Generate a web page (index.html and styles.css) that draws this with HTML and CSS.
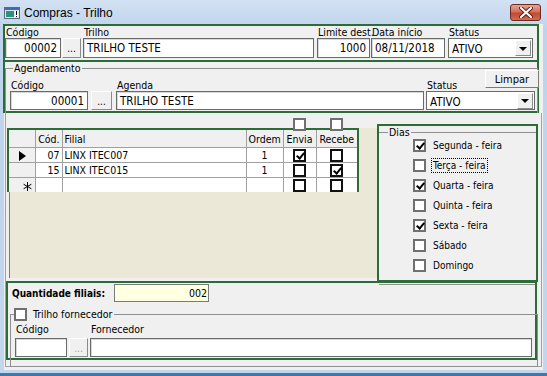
FILE: index.html
```html
<!DOCTYPE html>
<html>
	<head>
		<link rel="stylesheet" href="styles.css">
	</head>
	<body>
		<div class="window">
			<div class="titlebar">
				<svg class="app-icon" width="16" height="12" viewBox="0 0 16 12">
					<rect x="0.5" y="0.5" width="15" height="11" fill="#dfe6ee" stroke="#5b6b7d"/>
					<rect x="1" y="1" width="14" height="2" fill="#3a6fb0"/>
					<rect x="2" y="4" width="8" height="6" fill="#2f8f7a"/>
					<rect x="11" y="4" width="3" height="6" fill="#ffffff"/>
					<rect x="12" y="4" width="1" height="4" fill="#000"/>
					<rect x="12" y="9" width="1" height="1" fill="#000"/>
				</svg>
				<span class="title">Compras - Trilho</span>
				<div class="close">
					<svg width="14" height="11" viewBox="0 0 14 11">
						<path d="M2 1 L12 10 M12 1 L2 10" stroke="#5a1a12" stroke-width="4" stroke-linecap="round"/>
						<path d="M2 1 L12 10 M12 1 L2 10" stroke="#ffffff" stroke-width="2.2" stroke-linecap="round"/>
					</svg>
				</div>
			</div>

			<div class="client">
				<div class="hl box-main">
					<div class="field w-cod">
						<label>Código</label>
						<div class="input right">00002</div>
					</div>
					<div class="field w-dots">
						<label>&nbsp;</label>
						<div class="dots">...</div>
					</div>
					<div class="field w-trilho">
						<label>Trilho</label>
						<div class="input">TRILHO TESTE</div>
					</div>
					<div class="field w-limite">
						<label>Limite dest.</label>
						<div class="input right">1000</div>
					</div>
					<div class="field w-data">
						<label>Data início</label>
						<div class="input">08/11/2018</div>
					</div>
					<div class="field w-status">
						<label>Status</label>
						<div class="select"><span>ATIVO</span><i class="arrow"></i></div>
					</div>
				</div>

				<div class="hl box-agenda">
					<fieldset class="group agenda">
						<legend>Agendamento</legend>
						<button class="limpar">Limpar</button>
						<div class="agenda-row">
							<div class="field w-cod2">
								<label>Código</label>
								<div class="input right">00001</div>
							</div>
							<div class="field w-dots2">
								<label>&nbsp;</label>
								<div class="dots">...</div>
							</div>
							<div class="field w-agenda">
								<label>Agenda</label>
								<div class="input">TRILHO TESTE</div>
							</div>
							<div class="field w-status2">
								<label>Status</label>
								<div class="select"><span>ATIVO</span><i class="arrow"></i></div>
							</div>
						</div>
					</fieldset>
				</div>

				<div class="panel">
					<div class="middle">
						<div class="left">
							<div class="check-row">
								<span class="cb gray envia-all"></span>
								<span class="cb gray recebe-all"></span>
							</div>
							<div class="grid-ctl">
								<div class="hl grid-box">
									<table class="grid">
										<colgroup>
											<col class="c-ind"><col class="c-cod"><col class="c-filial"><col class="c-ordem"><col class="c-envia"><col class="c-recebe">
										</colgroup>
										<tr class="head">
											<td></td><td class="tr">Cód.</td><td>Filial</td><td class="tr">Ordem</td><td class="tc">Envia</td><td class="tc">Recebe</td>
										</tr>
										<tr class="r1">
											<td class="ind"><i class="tri"></i></td><td class="tr">07</td><td>LINX ITEC007</td><td class="tc">1</td>
											<td class="tc"><span class="cb dark on"></span></td><td class="tc"><span class="cb dark"></span></td>
										</tr>
										<tr class="r2">
											<td class="ind"></td><td class="tr">15</td><td>LINX ITEC015</td><td class="tc">1</td>
											<td class="tc"><span class="cb dark"></span></td><td class="tc"><span class="cb dark on"></span></td>
										</tr>
										<tr class="r3">
											<td class="ind">
												<svg class="star" width="9" height="9" viewBox="0 0 9 9">
													<path d="M4.5 0 V9 M0.6 2.25 L8.4 6.75 M0.6 6.75 L8.4 2.25" stroke="#000" stroke-width="1"/>
												</svg>
											</td><td></td><td></td><td></td>
											<td class="tc"><span class="cb dark"></span></td><td class="tc"><span class="cb dark"></span></td>
										</tr>
									</table>
								</div>
							</div>
						</div>

						<div class="hl dias-box">
							<fieldset class="group dias">
								<legend>Dias</legend>
								<ul class="days">
									<li><span class="cb gray on"></span><span class="day">Segunda - feira</span></li>
									<li><span class="cb gray"></span><span class="day focus">Terça - feira</span></li>
									<li><span class="cb gray on"></span><span class="day">Quarta - feira</span></li>
									<li><span class="cb gray"></span><span class="day">Quinta - feira</span></li>
									<li><span class="cb gray on"></span><span class="day">Sexta - feira</span></li>
									<li><span class="cb gray"></span><span class="day">Sábado</span></li>
									<li><span class="cb gray"></span><span class="day">Domingo</span></li>
								</ul>
							</fieldset>
						</div>
					</div>

					<div class="hl box-bottom">
						<div class="qtd-row">
							<span class="qtd-label">Quantidade filiais:</span>
							<div class="input qtd right">002</div>
						</div>
						<fieldset class="group forn">
							<legend><span class="cb gray"></span><span>Trilho fornecedor</span></legend>
							<div class="forn-row">
								<div class="field w-cod3">
									<label>Código</label>
									<div class="input"></div>
								</div>
								<div class="field w-dots3">
									<label>&nbsp;</label>
									<div class="dots disabled">...</div>
								</div>
								<div class="field w-forn">
									<label>Fornecedor</label>
									<div class="input"></div>
								</div>
							</div>
						</fieldset>
					</div>
				</div>
			</div>
		</div>
	</body>
</html>
```

FILE: styles.css
```css
body {
	margin: 0;
	background: #3b6d9c;
}
.window {
	width: 547px;
	height: 376px;
	box-sizing: border-box;
	background: linear-gradient(#d3e2f3, #bed3ec 30px, #c2d6ee);
	border-bottom: 3px solid #3d79ad;
	display: flex;
	flex-direction: column;
	font-family: "DejaVu Sans Condensed", "DejaVu Sans", sans-serif;
	font-stretch: condensed;
	font-size: 10.5px;
	color: #000;
}
.titlebar {
	height: 24px;
	display: flex;
	align-items: center;
	padding-left: 4px;
	flex-shrink: 0;
}
.app-icon {
	margin-top: 2px;
}
.title {
	font-family: "Liberation Sans", sans-serif;
	font-stretch: normal;
	font-size: 12px;
	margin-left: 4px;
	margin-top: 2px;
}
.close {
	margin-left: auto;
	margin-right: 6px;
	margin-top: 1px;
	width: 31px;
	height: 17px;
	box-sizing: border-box;
	border: 1px solid #6b2a22;
	border-radius: 3px;
	background: linear-gradient(#e8a493, #d2705c 45%, #c24a33 55%, #cf6b52);
	display: flex;
	justify-content: center;
	align-items: center;
}
.client {
	flex: 1;
	margin: 0 4px 3px 4px;
	background: #f0f0f0;
	display: flex;
	flex-direction: column;
}

/* green highlight boxes */
.hl {
	border: 2px solid #2c6c38;
	box-sizing: border-box;
}

/* fields */
.field {
	display: flex;
	flex-direction: column;
	flex-shrink: 0;
}
.field label {
	display: block;
	height: 12px;
	line-height: 12px;
	padding-left: 1px;
	white-space: nowrap;
}
.input {
	height: 20px;
	box-sizing: border-box;
	border: 1px solid #6a6a6a;
	box-shadow: inset 1px 1px 0 #d8d8d8;
	background: #fff;
	font-size: 11.5px;
	line-height: 19px;
	padding: 0 3px;
	white-space: nowrap;
	overflow: hidden;
}
.right {
	text-align: right;
}
.dots {
	height: 20px;
	box-sizing: border-box;
	border: 1px solid;
	border-color: #fff #8a8a8a #8a8a8a #fff;
	background: #f0f0f0;
	text-align: center;
	line-height: 20px;
	font-size: 10px;
}
.dots.disabled {
	color: #a0a0a0;
}
.select {
	height: 20px;
	box-sizing: border-box;
	border: 1px solid #6a6a6a;
	background: #fff;
	display: flex;
	align-items: center;
	font-size: 11.5px;
	padding-left: 3px;
}
.select span {
	flex: 1;
	margin-top: 2px;
}
.arrow {
	width: 16px;
	height: 16px;
	margin-right: 1px;
	box-sizing: border-box;
	border: 1px solid;
	border-color: #fff #8a8a8a #8a8a8a #fff;
	background: #f0f0f0;
	display: flex;
	justify-content: center;
	align-items: center;
}
.arrow::after {
	content: "";
	border-top: 4px solid #000;
	border-left: 4px solid transparent;
	border-right: 4px solid transparent;
	margin-top: 1px;
}

/* top box */
.box-main {
	width: 536px;
	height: 38px;
	margin-left: -1px;
	display: flex;
	align-items: flex-end;
	padding-bottom: 2px;
}
.w-cod { width: 56px; }
.w-dots { width: 19px; margin-left: 1px; }
.w-trilho { width: 231px; margin-left: 2px; }
.w-limite { width: 53px; margin-left: 3px; }
.w-data { width: 74px; margin-left: 1px; }
.w-status { width: 85px; margin-left: 3px; }

/* agenda box */
.box-agenda {
	width: 536px;
	height: 53px;
	margin: -2px 0 0 -1px;
}
.group {
	margin: 0;
	padding: 0;
	border: 1px solid #8f8f8f;
	min-width: 0;
}
.group legend {
	padding: 0 1px;
	line-height: 10px;
	height: 10px;
}
.agenda {
	width: 531px;
	height: 49px;
	border-bottom: none;
	position: relative;
	margin-top: 1px;
}
.agenda legend {
	margin-left: 7px;
}
.limpar {
	position: absolute;
	right: -2px;
	top: -3px;
	width: 54px;
	height: 18px;
	border: 1px solid;
	border-color: #fff #7a7a7a #7a7a7a #fff;
	background: #f0f0f0;
	font: inherit;
	font-size: 11px;
	padding: 0;
}
.agenda-row {
	display: flex;
	align-items: flex-end;
	padding-left: 4px;
	margin-top: 6px;
}
.agenda-row .input,
.agenda-row .select,
.agenda-row .dots {
	height: 19px;
}
.w-cod2 { width: 78px; }
.w-dots2 { width: 21px; margin-left: 3px; }
.w-agenda { width: 308px; margin-left: 4px; }
.w-status2 { width: 109px; margin-left: 2px; }

/* panel with grid and days */
.panel {
	width: 537px;
	margin-left: 1px;
	height: 254px;
	box-sizing: border-box;
	border: 1px solid #a0a0a0;
	border-top: none;
	display: flex;
	flex-direction: column;
}
.middle {
	display: flex;
	height: 168px;
}
.left {
	width: 371px;
}
.check-row {
	height: 17px;
	position: relative;
}
.cb {
	display: inline-block;
	width: 13px;
	height: 13px;
	box-sizing: border-box;
	background: #fff;
	border: 2px solid #707070;
	position: relative;
	vertical-align: middle;
	flex-shrink: 0;
}
.cb.dark {
	border-color: #111;
}
.cb.on::after {
	content: "";
	position: absolute;
	left: 3px;
	top: 0px;
	width: 3px;
	height: 6px;
	border: solid #000;
	border-width: 0 2px 2px 0;
	transform: rotate(40deg);
}
.check-row .cb {
	position: absolute;
	top: 5px;
}
.envia-all { left: 287px; }
.recebe-all { left: 324px; }

.grid-ctl {
	margin-left: 3px;
	width: 368px;
	height: 150px;
	box-sizing: border-box;
	background: #ebe8d8;
	border-left: 1px solid #7a7a7a;
}
.grid-box {
	margin: -2px 0 0 -3px;
	width: 352px;
	height: 64px;
}
.grid {
	border-collapse: collapse;
	table-layout: fixed;
	width: 348px;
	font-size: 10.5px;
}
.c-ind { width: 26px; }
.c-cod { width: 27px; }
.c-filial { width: 184px; }
.c-ordem { width: 37px; }
.c-envia { width: 33px; }
.c-recebe { width: 41px; }
.grid td {
	border: 1px solid #a0a0a0;
	padding: 0 2px;
	height: 14px;
	line-height: 13px;
	white-space: nowrap;
	overflow: hidden;
	background: #fff;
}
.grid tr.head td {
	height: 16px;
	background: #f0f0f0;
	padding-top: 1px;
}
.grid td.ind {
	background: #f0f0f0;
	text-align: center;
	padding: 0;
}
.grid tr td:first-child {
	border-left: none;
}
.grid tr.head td {
	border-top: none;
}
.grid tr.r3 td {
	border-bottom: none;
}
.grid tr td:last-child {
	border-right: none;
}
.tr { text-align: right; }
.tc { text-align: center; }
.grid td.tc {
	padding: 0;
}
.grid .cb {
	vertical-align: top;
	margin-top: 1px;
}
.tri {
	display: inline-block;
	width: 0;
	height: 0;
	border-left: 7px solid #000;
	border-top: 5px solid transparent;
	border-bottom: 5px solid transparent;
	vertical-align: middle;
	margin-left: 2px;
}
.star {
	display: block;
	margin: 2px auto 0 14px;
}

.dias-box {
	width: 161px;
	height: 158px;
	margin-top: 11px;
}
.dias {
	height: 156px;
	border-left: none;
	border-right: none;
	margin-top: 1px;
}
.dias legend {
	margin-left: 9px;
}
.days {
	list-style: none;
	margin: -2px 0 0 0;
	padding: 0 0 0 34px;
	font-size: 10px;
}
.days li {
	height: 20px;
	display: flex;
	align-items: center;
}
.day {
	margin-left: 5px;
	padding: 0 1px;
	line-height: 13px;
	border: 1px solid transparent;
}
.day.focus {
	border: 1px dotted #000;
}

/* bottom box */
.box-bottom {
	width: 531px;
	height: 79px;
	margin-top: 0;
	padding: 1px 0 0 2px;
}
.qtd-row {
	display: flex;
	align-items: center;
	height: 18px;
}
.qtd-label {
	width: 104px;
	font-weight: bold;
	font-size: 10px;
	padding-left: 2px;
	box-sizing: border-box;
	white-space: nowrap;
}
.input.qtd {
	width: 95px;
	height: 18px;
	background: #ffffe1;
	line-height: 16px;
	font-size: 10.5px;
	padding-right: 1px;
	box-shadow: none;
	border-color: #7a7a7a;
}
.forn {
	margin-top: 6px;
	width: 526px;
	height: 57px;
}
.forn legend {
	margin-left: 3px;
	height: 13px;
	line-height: 13px;
	display: flex;
	align-items: center;
	padding: 0 2px 0 0;
}
.forn legend .cb {
	margin-right: 6px;
}
.forn-row {
	display: flex;
	align-items: flex-end;
	padding-left: 4px;
	margin-top: 1px;
}
.forn-row label {
	height: 16px;
	line-height: 14px;
}
.forn-row .input,
.forn-row .dots {
	height: 19px;
}
.w-cod3 { width: 52px; }
.w-dots3 { width: 19px; margin-left: 2px; }
.w-forn { width: 442px; margin-left: 2px; }
```
